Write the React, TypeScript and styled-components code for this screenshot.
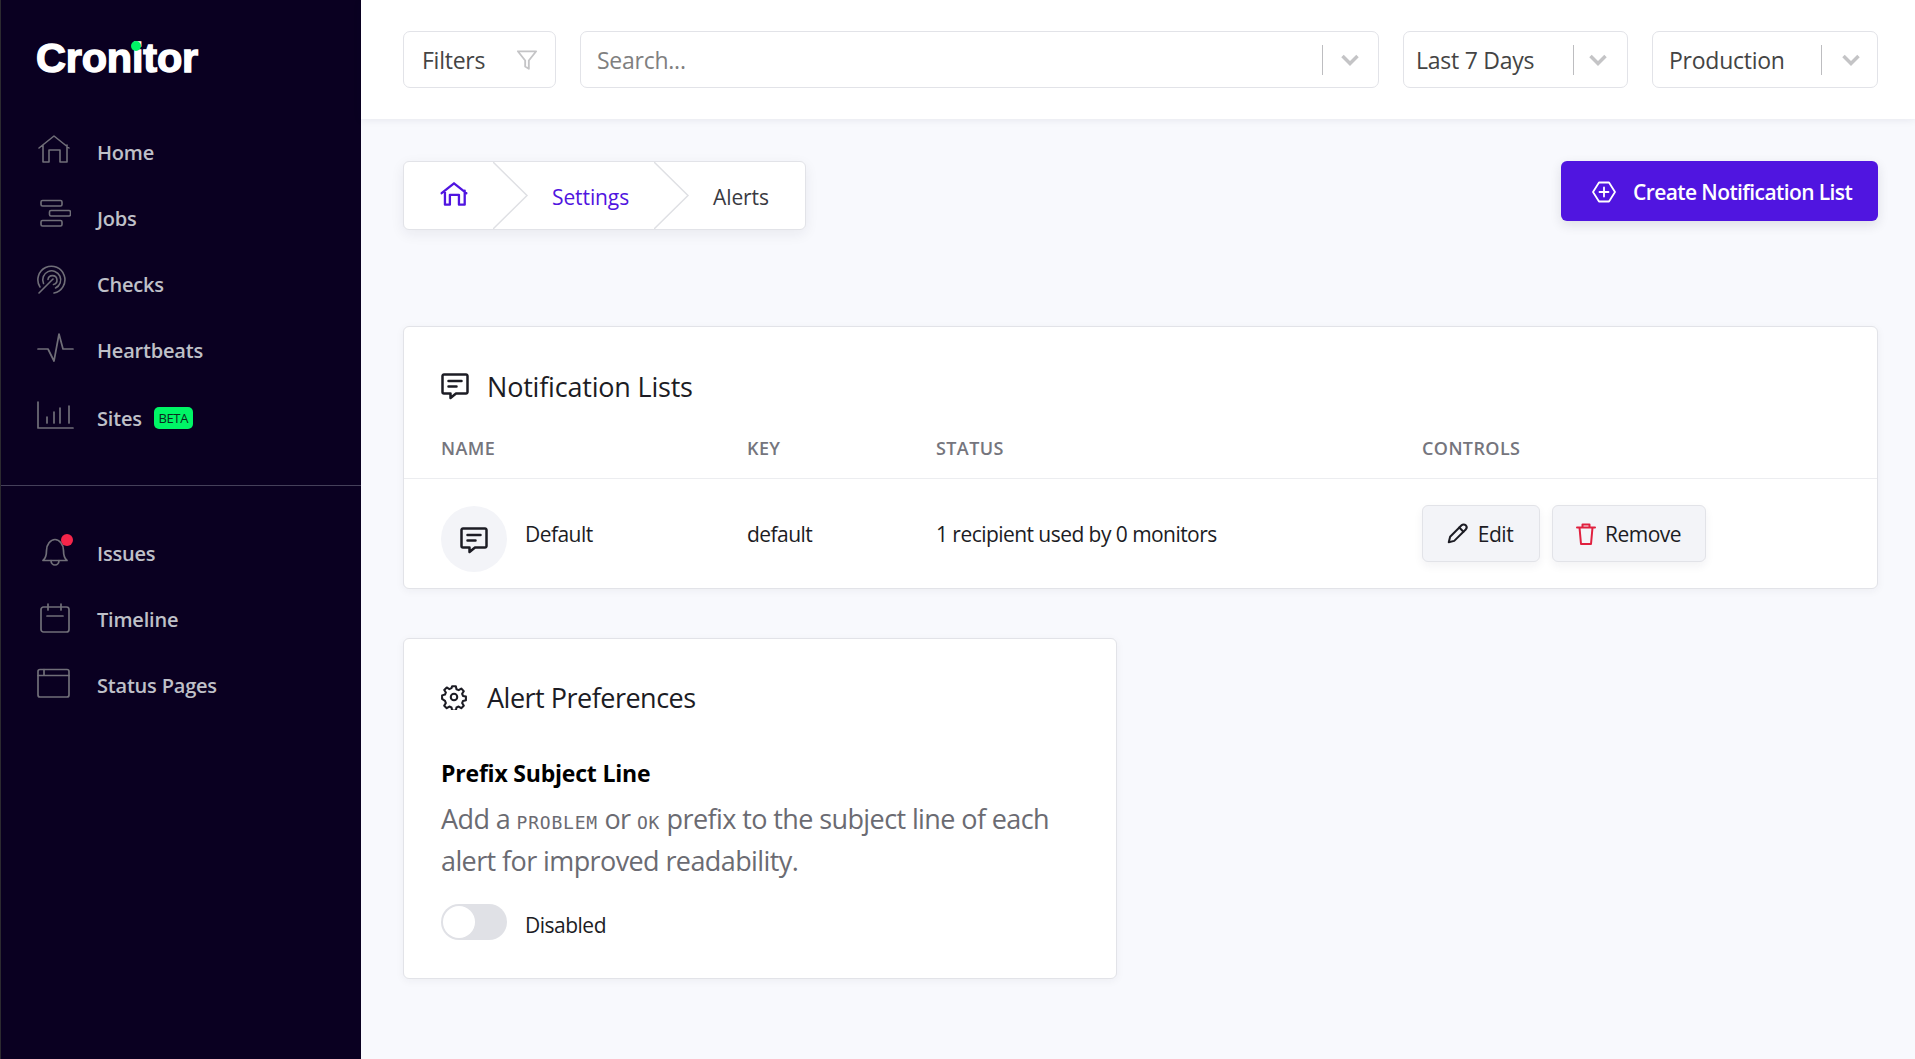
import type { ReactNode } from 'react';
import styled, { createGlobalStyle } from 'styled-components';

const Colors = {
  NAVY: '#0a0021',
  PURPLE: '#5015e0',
  GREEN: '#00f566',
  RED: '#f5254a',
  BORDER: '#e2e3e8',
  TEXT: '#1c1c24',
};

const GlobalStyle = createGlobalStyle`
  html, body {
    margin: 0;
    height: 100%;
    background: #f8f9fd;
  }
  body {
    font-family: 'Open Sans', 'Noto Sans', sans-serif;
    overflow: hidden;
  }
  * {
    box-sizing: border-box;
  }
`;

const Layout = styled.div`
  display: flex;
  width: 1915px;
  height: 1059px;
`;

const Sidebar = styled.nav`
  flex: 0 0 361px;
  background: ${Colors.NAVY};
  border-left: 1px solid #2c2a30;
`;

const LogoRow = styled.div`
  height: 119px;
  padding: 34px 0 0 35px;
`;

const Logo = styled.div`
  position: relative;
  display: inline-block;
  font-family: 'Liberation Sans', sans-serif;
  font-weight: 700;
  font-size: 41.5px;
  line-height: 48px;
  letter-spacing: -0.2px;
  color: #fff;
  -webkit-text-stroke: 1.4px #fff;
`;

const LogoDot = styled.span`
  position: absolute;
  top: 7px;
  left: 95px;
  width: 10px;
  height: 10px;
  border-radius: 50%;
  background: ${Colors.GREEN};
`;

const NavRow = styled.a<{ tall?: boolean }>`
  display: flex;
  align-items: center;
  height: ${({ tall }) => (tall ? 68 : 66)}px;
  padding: ${({ tall }) => (tall ? '2px' : 0)} 0 0 36px;
  font-size: 20px;
  font-weight: 600;
  letter-spacing: -0.2px;
  color: #bfc0c8;
`;

const NavIcon = styled.span<{ lift: number; inset?: number }>`
  position: relative;
  display: flex;
  flex: 0 0 60px;
  height: 38px;
  margin-top: ${({ lift }) => -lift * 2}px;
  padding-left: ${({ inset }) => inset || 0}px;
  align-items: center;
  color: #706e78;
`;

const NotifyDot = styled.span`
  position: absolute;
  top: 1px;
  left: 24px;
  width: 12px;
  height: 12px;
  border-radius: 50%;
  background: ${Colors.RED};
`;

const BetaBadge = styled.span`
  margin-left: 12px;
  width: 39px;
  height: 22px;
  border-radius: 5px;
  background: ${Colors.GREEN};
  color: #0a2a20;
  font-size: 13px;
  font-weight: 400;
  letter-spacing: -0.4px;
  line-height: 22px;
  text-align: center;
`;

const SideDivider = styled.div`
  height: 1px;
  margin: 34px 0;
  background: #45405a;
`;

const Main = styled.main`
  flex: 1;
  min-width: 0;
`;

const TopBar = styled.header`
  display: flex;
  gap: 24px;
  height: 119px;
  padding: 31px 37px 31px 42px;
  background: #fff;
  box-shadow: 0 1px 8px rgba(30, 30, 60, 0.08);
`;

const Control = styled.div<{ width?: number; inset: number }>`
  display: flex;
  align-items: center;
  flex: ${({ width }) => (width ? `0 0 ${width}px` : '1')};
  height: 57px;
  padding-left: ${({ inset }) => inset}px;
  border: 1px solid ${Colors.BORDER};
  border-radius: 7px;
  font-size: 23px;
  letter-spacing: -0.25px;
  color: #444;
`;

const ControlLabel = styled.span<{ muted?: boolean }>`
  flex: 1;
  padding-top: 1px;
  color: ${({ muted }) => (muted ? '#808080' : '#444')};
`;

const FilterIcon = styled.span`
  display: flex;
  margin-right: 17px;
  color: #c4c4c6;
`;

const SelectDivider = styled.span`
  width: 1px;
  height: 30px;
  background: #bdbdc0;
`;

const SelectArrow = styled.span<{ width: number; offset: number }>`
  display: flex;
  width: ${({ width }) => width}px;
  padding-left: ${({ offset }) => offset}px;
  color: #c4c4c6;
`;

const Content = styled.div`
  padding: 42px 37px 0 42px;
`;

const TitleRow = styled.div`
  display: flex;
  justify-content: space-between;
  align-items: flex-start;
  margin-bottom: 96px;
`;

const Breadcrumb = styled.div`
  display: flex;
  align-items: center;
  width: 403px;
  height: 69px;
  border: 1px solid ${Colors.BORDER};
  border-radius: 6px;
  background: #fff;
  box-shadow: 0 4px 14px rgba(30, 30, 60, 0.07);
  font-size: 21px;
  font-weight: 500;
  letter-spacing: -0.1px;
`;

const Crumb = styled.div<{ width: number; inset: number; active?: boolean }>`
  position: relative;
  display: flex;
  align-items: center;
  flex: 0 0 ${({ width }) => width}px;
  height: 100%;
  overflow: hidden;
  padding: 2px 0 0 ${({ inset }) => inset}px;
  color: ${({ active }) => (active ? Colors.PURPLE : '#3a3a42')};
`;

const HomeCrumbIcon = styled.span`
  display: flex;
  margin-top: -6px;
`;

const CrumbArrow = styled.svg`
  position: absolute;
  top: 0;
  right: 0;
  width: 36px;
  height: 100%;
  color: #dfe0e4;
`;

const CreateButton = styled.button`
  display: flex;
  align-items: center;
  gap: 17px;
  width: 317px;
  height: 60px;
  padding: 1px 0 0 31px;
  border: 0;
  border-radius: 6px;
  background: ${Colors.PURPLE};
  box-shadow: 0 4px 12px rgba(30, 30, 60, 0.12);
  color: #fff;
  font-family: inherit;
  font-size: 21px;
  font-weight: 600;
  letter-spacing: -0.6px;
`;

const Card = styled.section<{ width?: number; spaced?: boolean }>`
  width: ${({ width }) => (width ? `${width}px` : '100%')};
  margin-top: ${({ spaced }) => (spaced ? 49 : 0)}px;
  border: 1px solid ${Colors.BORDER};
  border-radius: 6px;
  background: #fff;
  box-shadow: 0 2px 8px rgba(30, 30, 60, 0.05);
`;

const CardTitle = styled.h2<{ top: number; gap: number; tracking: number }>`
  display: flex;
  align-items: center;
  gap: ${({ gap }) => gap}px;
  height: 34px;
  margin: ${({ top }) => top}px 0 0 37px;
  font-size: 27px;
  font-weight: 500;
  letter-spacing: ${({ tracking }) => tracking}px;
  color: ${Colors.TEXT};
`;

const TableGrid = styled.div`
  display: grid;
  grid-template-columns: 306px 189px 486px 1fr;
  padding-left: 37px;
`;

const TableHead = styled(TableGrid)`
  height: 76px;
  padding-top: 30px;
  border-bottom: 1px solid #ecedf0;
  font-size: 18px;
  font-weight: 600;
  line-height: 30px;
  letter-spacing: 0.4px;
  color: #75757d;
`;

const TableRow = styled(TableGrid)`
  height: 109px;
  padding-top: 27px;
  font-size: 21px;
  letter-spacing: -0.55px;
  color: #1c1c24;
`;

const NameCell = styled.div`
  display: flex;
  gap: 18px;
`;

const Avatar = styled.span`
  display: flex;
  align-items: center;
  justify-content: center;
  flex: 0 0 66px;
  height: 66px;
  border-radius: 50%;
  background: #f3f4f8;
  padding-top: 2px;
`;

const CellText = styled.div`
  padding-top: 15px;
  line-height: 26px;
`;

const Controls = styled.div`
  display: flex;
  gap: 12px;
  margin-top: -1px;
`;

const ActionButton = styled.button<{ width: number; gap: number }>`
  display: flex;
  align-items: center;
  justify-content: center;
  gap: ${({ gap }) => gap}px;
  width: ${({ width }) => width}px;
  height: 57px;
  padding: 0 3px 0 0;
  border: 1px solid ${Colors.BORDER};
  border-radius: 6px;
  background: #f3f4f8;
  box-shadow: 0 4px 10px rgba(30, 30, 60, 0.06);
  color: #1c1c24;
  font-family: inherit;
  font-size: 21px;
  font-weight: 500;
  letter-spacing: -0.5px;
`;

const TrashTint = styled.span`
  display: flex;
  color: #e0203f;
`;

const PrefBody = styled.div`
  padding: 44px 37px 38px;
`;

const PrefHeading = styled.h3`
  margin: 0 0 10px;
  font-size: 23px;
  font-weight: 700;
  line-height: 30px;
  letter-spacing: -0.2px;
  color: #000;
`;

const PrefText = styled.p`
  margin: 0 0 22px;
  font-size: 27px;
  line-height: 42px;
  letter-spacing: -0.6px;
  color: #6b6b72;
`;

const Code = styled.code`
  font-family: 'DejaVu Sans Mono', monospace;
  font-size: 18px;
  line-height: 1;
  letter-spacing: 0.8px;
`;

const ToggleRow = styled.div`
  display: flex;
  align-items: center;
  gap: 18px;
  font-size: 21px;
  font-weight: 500;
  letter-spacing: -0.5px;
  color: #1c1c24;
`;

const ToggleLabel = styled.span`
  margin-top: 5px;
`;

const Toggle = styled.span`
  display: flex;
  align-items: center;
  width: 66px;
  height: 36px;
  padding-left: 2px;
  border-radius: 18px;
  background: #e0e1e6;
`;

const ToggleKnob = styled.span`
  width: 32px;
  height: 32px;
  border-radius: 50%;
  background: #fff;
`;

const Icon = ({ size = 24, w = 24, sw = 1.5, children }: { size?: number; w?: number; sw?: number; children: ReactNode }) => (
  <svg width={size} height={size} viewBox={`0 0 ${w} ${w}`} fill="none" stroke="currentColor" strokeWidth={sw} strokeLinecap="round" strokeLinejoin="round">
    {children}
  </svg>
);

const HomeIcon = ({ size, sw }: { size: number; sw: number }) => (
  <Icon size={size} w={34} sw={sw}>
    <path d="M2 16 17 4l15 12M6 13v17h6V18h11v12h7V13" />
  </Icon>
);

const ChatIcon = () => (
  <Icon size={28} w={28} sw={2.5}>
    <path d="M3 2.500h22a1.500 1.500 0 0 1 1.500 1.500v16a1.500 1.500 0 0 1-1.500 1.500H15l-5.500 4.500v-4.500H3A1.500 1.500 0 0 1 1.500 20V4A1.500 1.500 0 0 1 3 2.500z" />
    <path d="M7.500 9h13M7.500 14.500h8" />
  </Icon>
);

const navTop = [
  {
    label: 'Home',
    lift: 3,
    icon: <HomeIcon size={34} sw={1.6} />,
  },
  {
    label: 'Jobs',
    lift: 4,
    icon: (
      <Icon size={34} w={34} sw={1.6}>
        <rect x="4" y="3.500" width="21" height="5.500" rx="1.500" />
        <rect x="12.500" y="13.500" width="21" height="5.500" rx="1.500" />
        <rect x="4" y="23.500" width="21" height="5.500" rx="1.500" />
      </Icon>
    ),
  },
  {
    label: 'Checks',
    lift: 4,
    icon: (
      <Icon size={30} w={30} sw={1.6}>
        <path d="M3 22A13.500 13.500 0 1 1 17 28" />
        <path d="M6.500 18.500A9 9 0 1 1 18.500 23" />
        <path d="M11 14.500a4.500 4.500 0 1 1 5.500 5" />
        <path d="M2 28 16 14" />
      </Icon>
    ),
  },
  {
    label: 'Heartbeats',
    lift: 3,
    icon: (
      <Icon size={38} w={38} sw={1.7}>
        <path d="M1 21h10l6 12 5-27 4 15h10" />
      </Icon>
    ),
  },
  {
    label: 'Sites',
    lift: 3,
    tall: true,
    icon: (
      <Icon size={38} w={38} sw={1.7}>
        <path d="M1 6v26h35" />
        <path d="M10 21v6M17 16v11M23 12v15M32 10v17" />
      </Icon>
    ),
  },
];

const navBottom = [
  {
    label: 'Issues',
    lift: 1,
    inset: 5,
    icon: (
      <>
        <Icon size={30} w={30} sw={1.7}>
          <path d="M1 23.500h24c-2.500-2-3.500-5-3.500-10 0-6-4-11-8.500-11s-8.500 5-8.500 11c0 5-1 8-3.500 10z" />
          <path d="M9 23.500a4 4.500 0 1 0 8 0" />
        </Icon>
        <NotifyDot />
      </>
    ),
  },
  {
    label: 'Timeline',
    lift: 1,
    inset: 3,
    icon: (
      <Icon size={30} w={30} sw={1.7}>
        <rect x="1" y="4" width="28" height="25" rx="2.500" />
        <path d="M8 1v6M21 1v6M7 13h16" />
      </Icon>
    ),
  },
  {
    label: 'Status Pages',
    lift: 2,
    icon: (
      <Icon size={34} w={34} sw={1.7}>
        <rect x="1" y="3.500" width="31" height="27.500" rx="2" />
        <path d="M1 9.500h31M7 3.500v6" />
      </Icon>
    ),
  },
];

const Chevron = () => (
  <svg width="18" height="12" viewBox="0 0 18 12" fill="none" stroke="currentColor" strokeWidth="3.500">
    <path d="m1.500 2 7.500 7.500L16.500 2" />
  </svg>
);

interface SelectProps {
  label: string;
  width?: number;
  muted?: boolean;
  inset: number;
  arrow: number;
  offset: number;
}

const Select = ({ label, width, muted, inset, arrow, offset }: SelectProps) => (
  <Control width={width} inset={inset}>
    <ControlLabel muted={muted}>{label}</ControlLabel>
    <SelectDivider />
    <SelectArrow width={arrow} offset={offset}>
      <Chevron />
    </SelectArrow>
  </Control>
);

const CrumbChevron = () => (
  <CrumbArrow viewBox="0 0 36 69" preserveAspectRatio="none" fill="none" stroke="currentColor" strokeWidth="1.500">
    <path d="M0 0 34 34.500 0 69" />
  </CrumbArrow>
);

export default function App() {
  return (
    <Layout>
      <GlobalStyle />
      <Sidebar>
        <LogoRow>
          <Logo>
            Cronitor
            <LogoDot />
          </Logo>
        </LogoRow>
        {navTop.map((item) => (
          <NavRow key={item.label} tall={item.tall}>
            <NavIcon lift={item.lift}>{item.icon}</NavIcon>
            {item.label}
            {item.label === 'Sites' && <BetaBadge>BETA</BetaBadge>}
          </NavRow>
        ))}
        <SideDivider />
        {navBottom.map((item) => (
          <NavRow key={item.label}>
            <NavIcon lift={item.lift} inset={item.inset}>
              {item.icon}
            </NavIcon>
            {item.label}
          </NavRow>
        ))}
      </Sidebar>
      <Main>
        <TopBar>
          <Control width={153} inset={18}>
            <ControlLabel>Filters</ControlLabel>
            <FilterIcon>
              <Icon size={22} w={24} sw={2}>
                <path d="M2 2.500h20l-8 10v9l-4-2.500v-6.500z" />
              </Icon>
            </FilterIcon>
          </Control>
          <Select label="Search..." muted inset={16} arrow={55} offset={18} />
          <Select label="Last 7 Days" width={225} inset={12} arrow={53} offset={15} />
          <Select label="Production" width={226} inset={16} arrow={55} offset={20} />
        </TopBar>
        <Content>
          <TitleRow>
            <Breadcrumb>
              <Crumb width={125} inset={36} active>
                <HomeCrumbIcon>
                  <HomeIcon size={28} sw={2.800} />
                </HomeCrumbIcon>
                <CrumbChevron />
              </Crumb>
              <Crumb width={161} inset={23} active>
                Settings
                <CrumbChevron />
              </Crumb>
              <Crumb width={115} inset={23}>
                Alerts
              </Crumb>
            </Breadcrumb>
            <CreateButton>
              <Icon size={24} w={24} sw={1.800}>
                <path d="M7 2.500h10l6 9.500-6 9.500H7L1 12z" />
                <path d="M12 7.500v9M7.500 12h9" />
              </Icon>
              Create Notification List
            </CreateButton>
          </TitleRow>
          <Card>
            <CardTitle top={42} gap={18} tracking={-0.2}>
              <ChatIcon />
              Notification Lists
            </CardTitle>
            <TableHead>
              <div>NAME</div>
              <div>KEY</div>
              <div>STATUS</div>
              <div>CONTROLS</div>
            </TableHead>
            <TableRow>
              <NameCell>
                <Avatar>
                  <ChatIcon />
                </Avatar>
                <CellText>Default</CellText>
              </NameCell>
              <CellText>default</CellText>
              <CellText>1 recipient used by 0 monitors</CellText>
              <Controls>
                <ActionButton width={118} gap={10}>
                  <Icon size={22} w={24} sw={2.200}>
                    <path d="M3 21l1.500-6L17 2.500a2.800 2.800 0 0 1 4.500 4.500L9 19.500z" />
                    <path d="m14.500 5 4.500 4.500" />
                  </Icon>
                  Edit
                </ActionButton>
                <ActionButton width={154} gap={7}>
                  <TrashTint>
                    <Icon size={24} w={24} sw={2}>
                      <path d="M3 5.500h18M8.500 5.500V2.500h7v3M5.500 5.500 7 22h10l1.500-16.500" />
                    </Icon>
                  </TrashTint>
                  Remove
                </ActionButton>
              </Controls>
            </TableRow>
          </Card>
          <Card width={714} spaced>
            <CardTitle top={41} gap={20} tracking={-0.5}>
              <Icon size={26} w={24} sw={1.900}>
                <circle cx="12" cy="12" r="3" />
                <path d="M10.300 2h3.400l.6 2.800 2 .9 2.400-1.500 2.300 2.400-1.500 2.400.8 2 2.700.6v3.300l-2.700.7-.8 2 1.500 2.400-2.300 2.300-2.400-1.500-2 .9-.6 2.800h-3.400l-.6-2.800-2-.9-2.400 1.500-2.300-2.300 1.500-2.400-.8-2L1 13.800v-3.300l2.700-.7.800-2L3 5.500l2.300-2.300 2.400 1.500 2-.9z" />
              </Icon>
              Alert Preferences
            </CardTitle>
            <PrefBody>
              <PrefHeading>Prefix Subject Line</PrefHeading>
              <PrefText>
                Add a <Code>PROBLEM</Code> or <Code>OK</Code> prefix to the subject line of each alert for improved readability.
              </PrefText>
              <ToggleRow>
                <Toggle>
                  <ToggleKnob />
                </Toggle>
                <ToggleLabel>Disabled</ToggleLabel>
              </ToggleRow>
            </PrefBody>
          </Card>
        </Content>
      </Main>
    </Layout>
  );
}
